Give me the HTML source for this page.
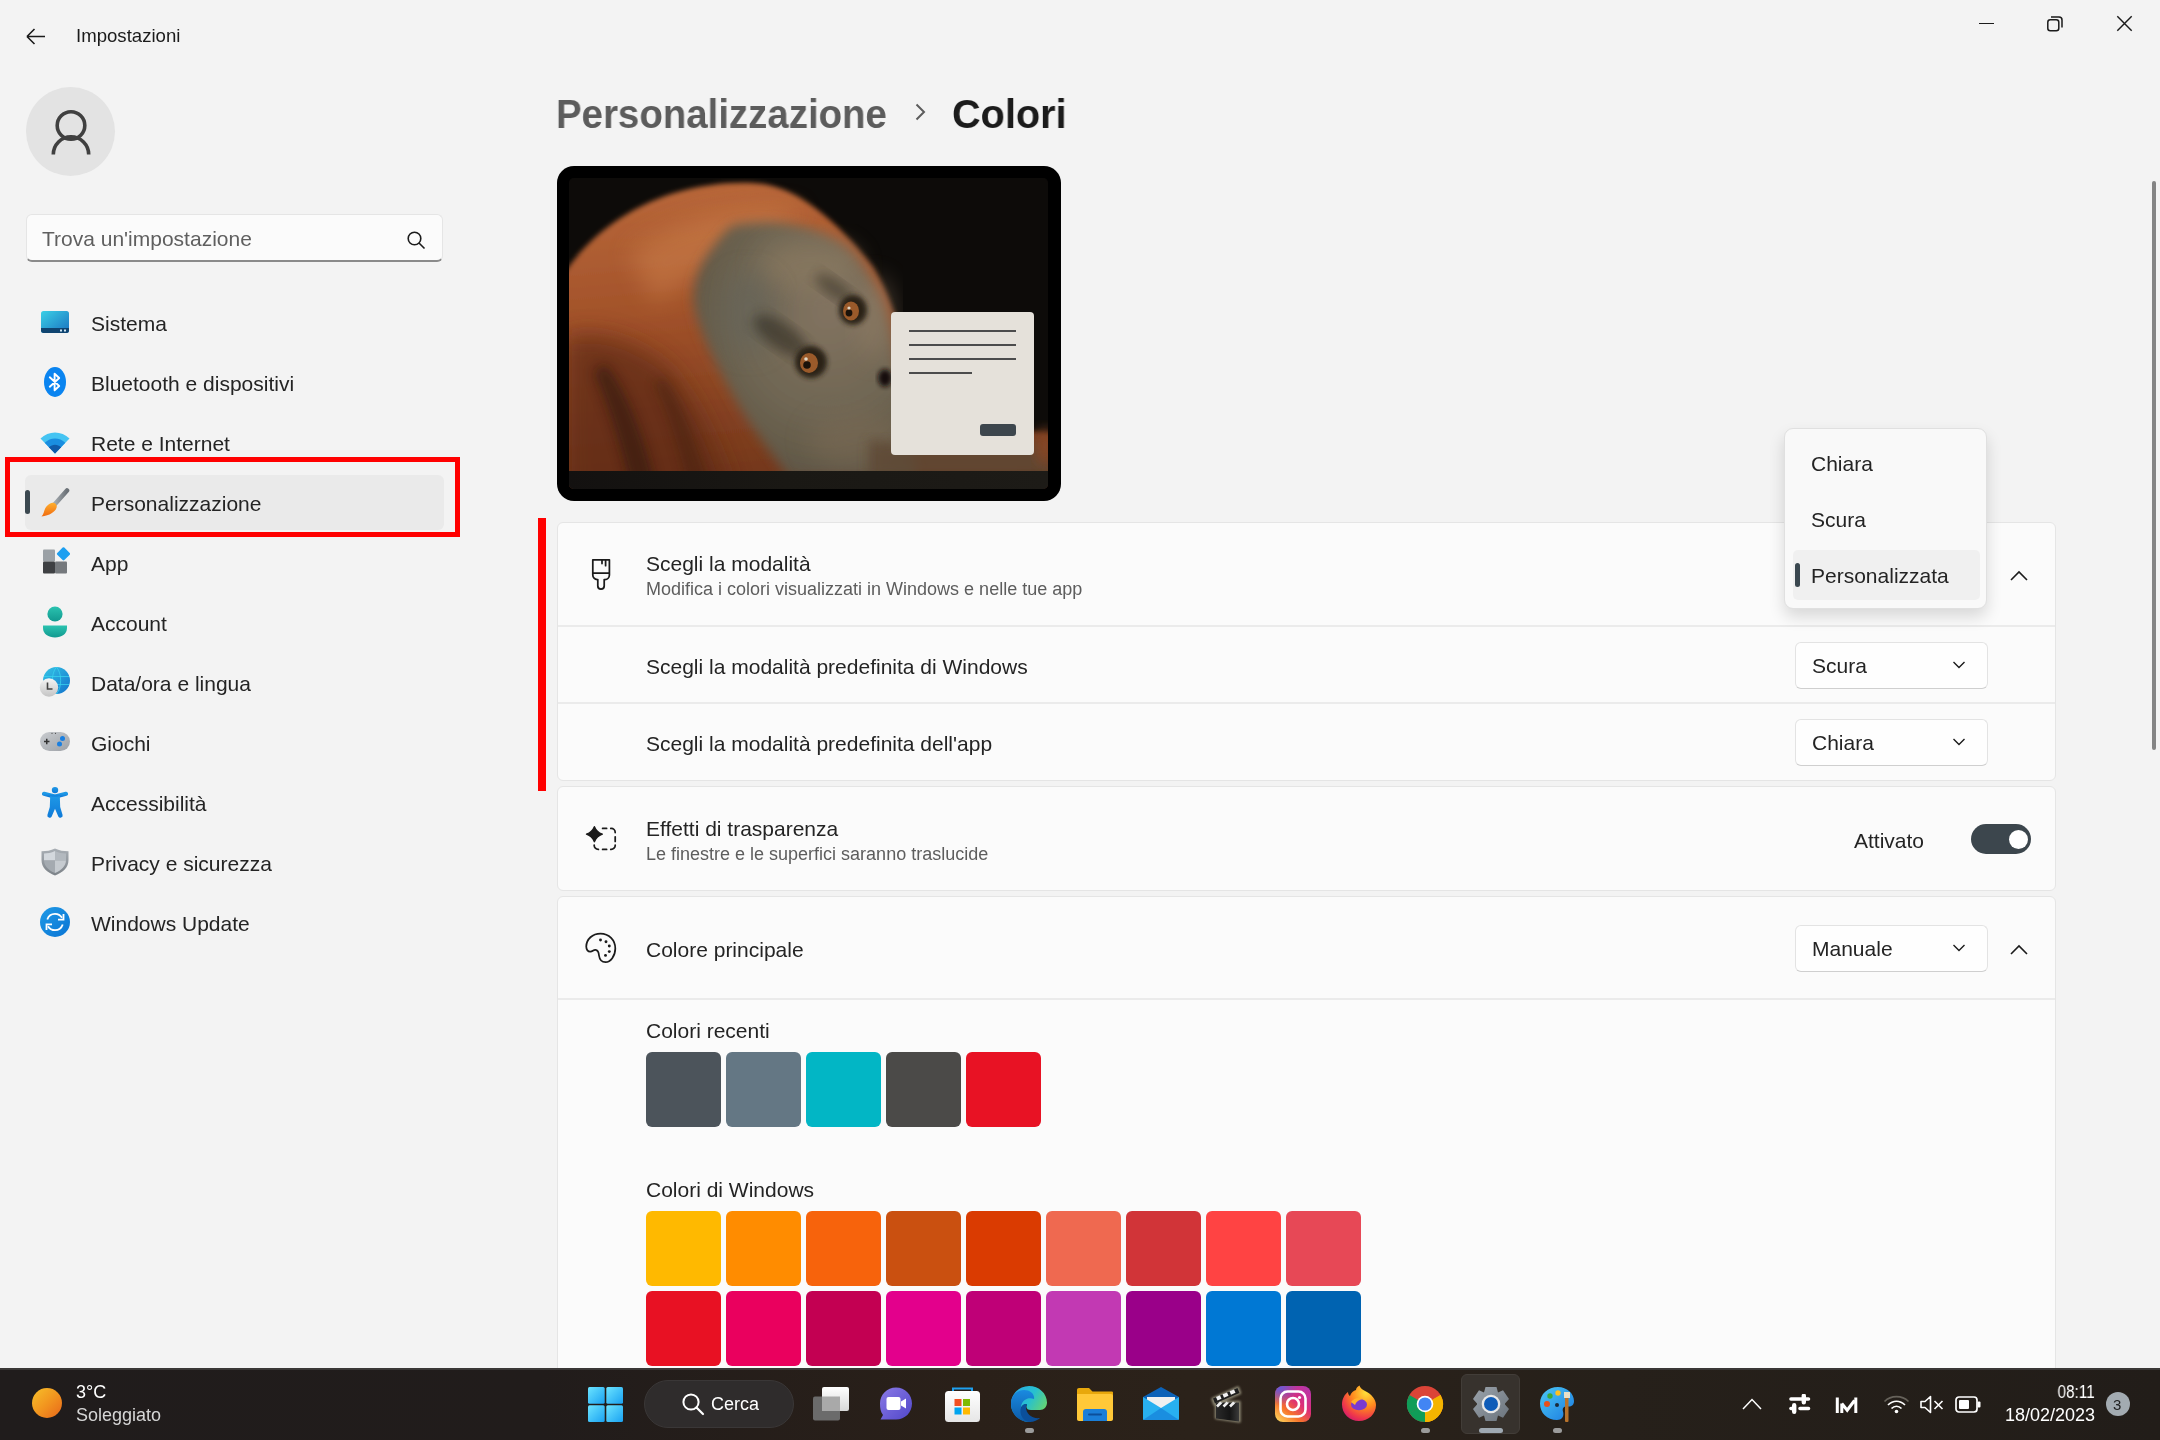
<!DOCTYPE html>
<html><head><meta charset="utf-8">
<style>
*{margin:0;padding:0;box-sizing:border-box}
html,body{width:2160px;height:1440px;overflow:hidden;background:#f3f3f3;font-family:"Liberation Sans",sans-serif;color:#242424}
.a{position:absolute}
.t{position:absolute;white-space:nowrap;line-height:1;will-change:transform}
.nav{font-size:21px;color:#242424}
.card{position:absolute;background:#fbfbfb;border:1.5px solid #e5e5e5;border-radius:6px}
.sep{position:absolute;height:2px;background:#ebebeb}
.dd{position:absolute;background:#fefefe;border:1.5px solid #e3e3e3;border-bottom-color:#cfcfcf;border-radius:6px}
.sw{position:absolute;width:75px;height:75px;border-radius:6px}
</style></head><body>

<!-- title bar -->
<svg class="a" style="left:24px;top:26px" width="24" height="22" viewBox="0 0 24 22"><path d="M3 10.5H21M3 10.5L10.5 3M3 10.5L10.5 18" stroke="#1b1b1b" stroke-width="1.6" fill="none"/></svg>
<div class="t" style="left:76px;top:27px;font-size:18.6px;color:#1b1b1b">Impostazioni</div>

<!-- window controls -->
<div class="a" style="left:1979px;top:22.7px;width:15px;height:1.5px;background:#1b1b1b"></div>
<svg class="a" style="left:2045px;top:14px" width="20" height="18" viewBox="0 0 20 18"><rect x="2.8" y="5.8" width="11" height="11" rx="2.5" fill="none" stroke="#1b1b1b" stroke-width="1.5"/><path d="M6 3H14C15.8 3 17 4.2 17 6V13.5" fill="none" stroke="#1b1b1b" stroke-width="1.5"/></svg>
<svg class="a" style="left:2116px;top:15px" width="17" height="17" viewBox="0 0 17 17"><path d="M1.3 1.3L15.7 15.7M15.7 1.3L1.3 15.7" stroke="#1b1b1b" stroke-width="1.45"/></svg>

<!-- avatar -->
<div class="a" style="left:26px;top:87px;width:89px;height:89px;border-radius:50%;background:#e3e3e3"></div>
<svg class="a" style="left:45px;top:105px" width="52" height="52" viewBox="0 0 52 52"><circle cx="26" cy="20.5" r="13.8" fill="none" stroke="#404040" stroke-width="3.6"/><path d="M8.3 49.5A17.7 17.7 0 0 1 43.7 49.5" fill="none" stroke="#404040" stroke-width="3.6"/></svg>

<!-- search -->
<div class="a" style="left:26px;top:214px;width:417px;height:48px;background:#fbfbfb;border:1px solid #e5e5e5;border-bottom:2px solid #8a8a8a;border-radius:6px"></div>
<div class="t" style="left:42px;top:228px;font-size:21px;color:#5f5f5f">Trova un'impostazione</div>
<svg class="a" style="left:405px;top:229px" width="22" height="22" viewBox="0 0 22 22"><circle cx="9.5" cy="9.5" r="6.3" fill="none" stroke="#1b1b1b" stroke-width="1.6"/><path d="M14 14L19.5 19.5" stroke="#1b1b1b" stroke-width="1.6"/></svg>

<!-- nav selected -->
<div class="a" style="left:25px;top:475px;width:419px;height:55px;background:#eaeaea;border-radius:6px"></div>
<div class="a" style="left:25px;top:490px;width:5px;height:24px;background:#3b4850;border-radius:3px"></div>

<!-- nav text -->
<div class="t nav" style="left:91px;top:313px">Sistema</div>
<div class="t nav" style="left:91px;top:373px">Bluetooth e dispositivi</div>
<div class="t nav" style="left:91px;top:433px">Rete e Internet</div>
<div class="t nav" style="left:91px;top:493px">Personalizzazione</div>
<div class="t nav" style="left:91px;top:553px">App</div>
<div class="t nav" style="left:91px;top:613px">Account</div>
<div class="t nav" style="left:91px;top:673px">Data/ora e lingua</div>
<div class="t nav" style="left:91px;top:733px">Giochi</div>
<div class="t nav" style="left:91px;top:793px">Accessibilità</div>
<div class="t nav" style="left:91px;top:853px">Privacy e sicurezza</div>
<div class="t nav" style="left:91px;top:913px">Windows Update</div>


<!-- Sistema icon -->
<svg class="a" style="left:40px;top:310px" width="30" height="24" viewBox="0 0 30 24"><defs><linearGradient id="gs" x1="0" y1="0" x2="1" y2="1"><stop offset="0" stop-color="#3bd0e6"/><stop offset="1" stop-color="#1a72c0"/></linearGradient></defs><rect x="1" y="1" width="28" height="22" rx="2.5" fill="url(#gs)"/><path d="M1 18H29V20.5C29 21.9 27.9 23 26.5 23H3.5C2.1 23 1 21.9 1 20.5Z" fill="#0f4470"/><rect x="20" y="19.5" width="2" height="2" fill="#cfe6f5"/><rect x="24" y="19.5" width="2" height="2" fill="#cfe6f5"/></svg>
<!-- Bluetooth -->
<svg class="a" style="left:42px;top:366px" width="26" height="32" viewBox="0 0 26 32"><ellipse cx="13" cy="16" rx="11" ry="15" fill="#0a84f0"/><path d="M7.8 11.3L17.2 20L12.6 24.3V7.7L17.2 12L7.8 20.7" fill="none" stroke="#fff" stroke-width="1.9" stroke-linejoin="round" stroke-linecap="round"/></svg>
<!-- Wifi -->
<svg class="a" style="left:40px;top:431px" width="30" height="23" viewBox="0 0 30 23"><path d="M0.5 7.5C8.5 -0.5 21.5 -0.5 29.5 7.5L15 22.5Z" fill="#45c4f2"/><path d="M4.7 11.8C10.5 6 19.5 6 25.3 11.8L15 22.5Z" fill="#1a8ee0"/><path d="M8.9 16.2C12.3 12.8 17.7 12.8 21.1 16.2L15 22.5Z" fill="#0f5aa8"/></svg>
<!-- Brush -->
<svg class="a" style="left:40px;top:487px" width="30" height="30" viewBox="0 0 30 30"><defs><linearGradient id="gbh" x1="0" y1="0" x2="1" y2="0"><stop offset="0" stop-color="#a3a9ae"/><stop offset="1" stop-color="#6b7177"/></linearGradient><linearGradient id="gbt" x1="0" y1="0" x2="0" y2="1"><stop offset="0" stop-color="#ffb02e"/><stop offset="1" stop-color="#f06a10"/></linearGradient></defs><path d="M15 17L27 3.5" stroke="url(#gbh)" stroke-width="4.6" stroke-linecap="round"/><path d="M12.2 15.8C14.8 15.2 17.5 17.8 16.6 20.6C15.5 24.5 10 28.6 1.5 29.5C4 27.5 3.8 23 6.2 19.8C8.2 17.4 10.3 16.2 12.2 15.8Z" fill="url(#gbt)"/></svg>
<!-- App -->
<svg class="a" style="left:42px;top:547px" width="28" height="28" viewBox="0 0 28 28"><rect x="1" y="2.5" width="12" height="12" rx="1" fill="#9ba1a6"/><rect x="1" y="14.5" width="12" height="12" rx="1" fill="#3e4043"/><rect x="13" y="14.5" width="12" height="12" rx="1" fill="#75797d"/><rect x="16.5" y="1.8" width="10" height="10" rx="1.2" transform="rotate(45 21.5 6.8)" fill="#1d9ff0"/></svg>
<!-- Account -->
<svg class="a" style="left:42px;top:605px" width="26" height="34" viewBox="0 0 26 34"><defs><linearGradient id="ga" x1="0" y1="0" x2="0" y2="1"><stop offset="0" stop-color="#2bc3b0"/><stop offset="1" stop-color="#11998f"/></linearGradient></defs><circle cx="13" cy="9" r="7.6" fill="url(#ga)"/><path d="M1 20.5H25V23C25 29 19.5 32.5 13 32.5S1 29 1 23Z" fill="url(#ga)"/></svg>
<!-- Data/ora -->
<svg class="a" style="left:38px;top:665px" width="34" height="34" viewBox="0 0 34 34"><defs><linearGradient id="gg" x1="0" y1="0" x2="1" y2="1"><stop offset="0" stop-color="#36c6e6"/><stop offset="1" stop-color="#1272cc"/></linearGradient><linearGradient id="gc" x1="0" y1="0" x2="0" y2="1"><stop offset="0" stop-color="#f5f5f5"/><stop offset="1" stop-color="#c4c4c4"/></linearGradient></defs><circle cx="18.5" cy="15.5" r="13.5" fill="url(#gg)"/><path d="M6 11.5H31M6 19.5H31M18.5 2C13 8 13 23 18.5 29M18.5 2C24 8 24 23 18.5 29" fill="none" stroke="#3ad6f0" stroke-width="0.9" opacity="0.8"/><circle cx="11" cy="22.5" r="9.2" fill="url(#gc)"/><path d="M9.5 17.5V24H14.5" fill="none" stroke="#444" stroke-width="1.6"/></svg>
<!-- Giochi -->
<svg class="a" style="left:39px;top:731px" width="32" height="22" viewBox="0 0 32 22"><defs><linearGradient id="gj" x1="0" y1="0" x2="1" y2="1"><stop offset="0" stop-color="#c9ccd0"/><stop offset="1" stop-color="#9da1a6"/></linearGradient></defs><rect x="1" y="1" width="30" height="19" rx="9.5" fill="url(#gj)"/><path d="M5 10.5H10.5M7.75 7.7V13.3" stroke="#333" stroke-width="1.5"/><circle cx="23.5" cy="7.5" r="2.5" fill="#1a7fe0"/><circle cx="20.5" cy="13" r="2.5" fill="#1a7fe0"/><circle cx="13" cy="2.3" r="0.6" fill="#444"/><circle cx="16.5" cy="2.3" r="0.6" fill="#444"/></svg>
<!-- Accessibilita -->
<svg class="a" style="left:41px;top:786px" width="28" height="33" viewBox="0 0 28 33"><defs><linearGradient id="gac" x1="0" y1="0" x2="0" y2="1"><stop offset="0" stop-color="#1e98e6"/><stop offset="1" stop-color="#0f7ad8"/></linearGradient></defs><circle cx="14" cy="4.1" r="3.2" fill="url(#gac)"/><path d="M3 7.8L14 10.6L25 7.8" fill="none" stroke="url(#gac)" stroke-width="4.2" stroke-linecap="round" stroke-linejoin="round"/><path d="M9.2,10 C11,10.8 17,10.8 18.8,10 L19.2,21 L21.6,29 A2.3,2.3 0 0 1 17.3,30.5 L14,22.8 L10.7,30.5 A2.3,2.3 0 0 1 6.4,29 L8.8,21 Z" fill="url(#gac)"/></svg>
<!-- Privacy shield -->
<svg class="a" style="left:40px;top:847px" width="30" height="30" viewBox="0 0 30 30"><defs><linearGradient id="gsh" x1="0" y1="0" x2="0" y2="1"><stop offset="0" stop-color="#a9afb5"/><stop offset="1" stop-color="#7c8288"/></linearGradient><clipPath id="shc"><path d="M15 4C11 6 7.5 6.4 4 6.5V13C4 19 8.5 23.3 15 26C21.5 23.3 26 19 26 13V6.5C22.5 6.4 19 6 15 4Z"/></clipPath></defs><path d="M15 1.5C10.5 3.8 6.5 4 1.5 4.2V13C1.5 20.5 7 25.5 15 28.5C23 25.5 28.5 20.5 28.5 13V4.2C23.5 4 19.5 3.8 15 1.5Z" fill="url(#gsh)"/><g clip-path="url(#shc)"><rect x="0" y="0" width="15" height="13.5" fill="#d3d8dd"/><rect x="15" y="0" width="15" height="13.5" fill="#b3b9bf"/><rect x="0" y="13.5" width="15" height="17" fill="#a4aab0"/><rect x="15" y="13.5" width="15" height="17" fill="#c6cbd0"/></g></svg>
<!-- Windows Update -->
<svg class="a" style="left:39px;top:906px" width="32" height="32" viewBox="0 0 32 32"><defs><linearGradient id="gu" x1="0" y1="0" x2="1" y2="1"><stop offset="0" stop-color="#1f9ae6"/><stop offset="1" stop-color="#0a74d4"/></linearGradient></defs><circle cx="16" cy="16" r="15" fill="url(#gu)"/><path d="M8.3 13.5C9.5 9.8 12.5 7.8 16 7.8C19 7.8 21.5 9.3 23 11.8" fill="none" stroke="#fff" stroke-width="1.8"/><path d="M24.5 8V13.6H19" fill="none" stroke="#fff" stroke-width="1.8"/><path d="M23.7 18.5C22.5 22.2 19.5 24.2 16 24.2C13 24.2 10.5 22.7 9 20.2" fill="none" stroke="#fff" stroke-width="1.8"/><path d="M7.5 24V18.4H13" fill="none" stroke="#fff" stroke-width="1.8"/></svg>


<!-- red box -->
<div class="a" style="left:4.5px;top:456.5px;width:455px;height:80px;border:5.2px solid #ff0000"></div>
<div class="a" style="left:538px;top:518px;width:8px;height:273px;background:#ff0000"></div>

<!-- breadcrumb -->
<div class="t" style="left:556px;top:93.5px;font-size:41px;font-weight:bold;color:#5c5c5c;transform:scaleX(0.937);transform-origin:0 0">Personalizzazione</div>
<svg class="a" style="left:912px;top:102px" width="16" height="20" viewBox="0 0 16 20"><path d="M4.5 2.5L12 10L4.5 17.5" fill="none" stroke="#5c5c5c" stroke-width="2"/></svg>
<div class="t" style="left:952px;top:93.5px;font-size:41px;font-weight:bold;color:#1b1b1b;transform:scaleX(0.968);transform-origin:0 0">Colori</div>

<!-- PREVIEW -->
<div class="a" style="left:557px;top:166px;width:504px;height:335px;background:#000;border-radius:17px"></div>
<div class="a" style="left:569px;top:178px;width:479px;height:311px;border-radius:5px;overflow:hidden;background:#0d0b09">
<svg width="479" height="311" viewBox="0 0 479 311" style="display:block">
<defs>
<filter id="b3" x="-20%" y="-20%" width="140%" height="140%"><feGaussianBlur stdDeviation="2.5"/></filter>
<filter id="b6" x="-20%" y="-20%" width="140%" height="140%"><feGaussianBlur stdDeviation="6"/></filter>
<filter id="b12" x="-30%" y="-30%" width="160%" height="160%"><feGaussianBlur stdDeviation="12"/></filter>
<linearGradient id="hairg" x1="0.2" y1="0" x2="0.35" y2="1"><stop offset="0" stop-color="#b9683a"/><stop offset="0.4" stop-color="#a2522a"/><stop offset="1" stop-color="#6e341a"/></linearGradient>
<radialGradient id="faceg" cx="0.6" cy="0.35" r="0.7"><stop offset="0" stop-color="#827360"/><stop offset="0.6" stop-color="#6e6552"/><stop offset="1" stop-color="#5c5343"/></radialGradient>
</defs>
<rect width="479" height="311" fill="#0d0b09"/>
<path filter="url(#b3)" d="M-10,320 V104 C10,68 50,32 105,15 C140,5 170,3 195,6 C232,12 270,45 304,89 C313,104 320,120 326,138 L344,240 C400,248 450,252 490,256 V320 Z" fill="url(#hairg)"/>
<path filter="url(#b12)" d="M-5,160 C30,150 70,165 100,190 C125,220 145,260 165,320 L-5,320 Z" fill="#5e2a14" opacity="0.7"/>
<path filter="url(#b6)" d="M35,185 C55,205 75,255 88,311 L62,311 C52,270 40,230 25,195Z" fill="#2a140a" opacity="0.55"/>
<path filter="url(#b6)" d="M95,200 C110,220 125,260 140,311 L120,311 C110,270 100,235 85,205Z" fill="#3a1a0c" opacity="0.4"/>
<path filter="url(#b12)" d="M60,75 C110,38 180,22 235,32 C205,58 140,88 85,125 Z" fill="#d28650" opacity="0.45"/>
<path filter="url(#b6)" d="M165,47 C200,41 243,44 278,70 C302,92 316,122 324,160 L348,300 L220,300 C200,272 176,242 162,214 C148,188 134,162 127,137 C120,114 128,88 145,68 C152,58 158,51 165,47 Z" fill="url(#faceg)"/>
<ellipse filter="url(#b12)" cx="240" cy="88" rx="50" ry="26" fill="#8c7b62" opacity="0.6"/>
<ellipse filter="url(#b12)" cx="305" cy="140" rx="18" ry="40" fill="#958068" opacity="0.5"/>
<ellipse filter="url(#b12)" cx="290" cy="262" rx="50" ry="28" fill="#7c6a55" opacity="0.5"/>
<ellipse filter="url(#b12)" cx="180" cy="135" rx="30" ry="40" fill="#64645a" opacity="0.55"/>
<ellipse filter="url(#b6)" cx="212" cy="158" rx="32" ry="13" transform="rotate(35 212 158)" fill="#2c271e" opacity="0.55"/>
<ellipse filter="url(#b6)" cx="265" cy="110" rx="22" ry="9" transform="rotate(35 265 110)" fill="#2c271e" opacity="0.45"/>
<ellipse cx="284" cy="132" rx="14" ry="15" fill="#2a2219" filter="url(#b3)"/>
<ellipse cx="282" cy="133" rx="8" ry="9.5" fill="#9a5a2a"/>
<circle cx="280" cy="135" r="3.4" fill="#1a120a"/>
<circle cx="280" cy="130" r="1.6" fill="#e0d8c8"/>
<ellipse cx="242" cy="184" rx="16" ry="16" fill="#2a2219" filter="url(#b3)"/>
<ellipse cx="240" cy="185" rx="9" ry="10" fill="#9a5a2a"/>
<circle cx="238" cy="187" r="3.8" fill="#1a120a"/>
<circle cx="237" cy="181" r="1.8" fill="#e0d8c8"/>
<ellipse cx="316" cy="200" rx="7" ry="9" fill="#15110c" filter="url(#b3)"/>
<rect x="0" y="293" width="479" height="18" fill="#131110"/>
<path filter="url(#b6)" d="M300,262 C360,270 420,268 470,262 L490,300 L300,300 Z" fill="#5e4836" opacity="0.85"/><ellipse filter="url(#b6)" cx="476" cy="268" rx="10" ry="18" fill="#8a4a26" opacity="0.8"/>
<defs><linearGradient id="ptb" x1="0" y1="0" x2="1" y2="0"><stop offset="0" stop-color="#131110"/><stop offset="0.45" stop-color="#1a1814"/><stop offset="1" stop-color="#1d1b17"/></linearGradient></defs><rect x="0" y="293" width="479" height="18" fill="url(#ptb)"/>
<rect x="322" y="134" width="143" height="143" rx="4" fill="#e5e1da"/>
<rect x="340" y="152" width="107" height="2" fill="#4c4c4c"/>
<rect x="340" y="166" width="107" height="2" fill="#4c4c4c"/>
<rect x="340" y="180" width="107" height="2" fill="#4c4c4c"/>
<rect x="340" y="194" width="63" height="2" fill="#4c4c4c"/>
<rect x="411" y="246" width="36" height="12" rx="3" fill="#3d464d"/>
</svg></div>

<!-- CARDS -->
<div class="card" style="left:557px;top:522px;width:1499px;height:259px"></div>
<div class="sep" style="left:558px;top:625px;width:1497px"></div>
<div class="sep" style="left:558px;top:702px;width:1497px"></div>
<div class="card" style="left:557px;top:786px;width:1499px;height:105px"></div>
<div class="card" style="left:557px;top:896px;width:1499px;height:520px"></div>
<div class="sep" style="left:558px;top:998px;width:1497px"></div>

<div class="t" style="left:646px;top:553px;font-size:21px">Scegli la modalità</div>
<div class="t" style="left:646px;top:580px;font-size:18px;color:#5d5d5d">Modifica i colori visualizzati in Windows e nelle tue app</div>
<div class="t" style="left:646px;top:656px;font-size:21px">Scegli la modalità predefinita di Windows</div>
<div class="t" style="left:646px;top:733px;font-size:21px">Scegli la modalità predefinita dell'app</div>
<div class="t" style="left:646px;top:818px;font-size:21px">Effetti di trasparenza</div>
<div class="t" style="left:646px;top:845px;font-size:18px;color:#5d5d5d">Le finestre e le superfici saranno traslucide</div>
<div class="t" style="left:646px;top:939px;font-size:21px">Colore principale</div>


<!-- card icons -->
<svg class="a" style="left:580px;top:550px" width="40" height="45" viewBox="0 0 40 45"><path d="M12.8,9.8 H29.4 V25 C29.4,27.6 27.5,29.5 25,29.5 H24.2 V36 C24.2,38 22.8,39 21,39 C19.2,39 17.8,38 17.8,36 V29.5 H17.2 C14.7,29.5 12.8,27.6 12.8,25 Z M12.8,23 H29.4 M22,10 V13.5 M25.6,10 V15.7" fill="none" stroke="#1b1b1b" stroke-width="1.75" stroke-linecap="round" stroke-linejoin="round"/></svg>
<svg class="a" style="left:580px;top:815px" width="45" height="45" viewBox="0 0 45 45"><path d="M14.4,11.7 Q16.5,17.1 22.3,19.2 Q16.5,21.3 14.4,26.7 Q12.3,21.3 6.5,19.2 Q12.3,17.1 14.4,11.7 Z" fill="#1b1b1b" stroke="#1b1b1b" stroke-width="1.4" stroke-linejoin="round"/><path d="M22.6,13.4 H26.6 M30.8,13.4 H31.2 A4,4 0 0 1 35.2,17.4 V17.6 M35.2,21.8 V26.4 M35.2,30.2 V30.4 A4,4 0 0 1 31.2,34.4 H30.8 M26.6,34.4 H22.6 M18.4,34.4 H18.2 A4,4 0 0 1 14.2,30.4 V30" fill="none" stroke="#1b1b1b" stroke-width="1.75" stroke-linecap="round"/></svg>
<svg class="a" style="left:580px;top:925px" width="45" height="45" viewBox="0 0 45 45"><path d="M20.5,8.6 C29,8.6 35.3,15 35.3,23.5 C35.3,31 30.5,37.2 25.5,37.2 C21.5,37.2 19.5,34 19,30.5 C18.7,27 18,25 15.5,24.8 C13.5,24.6 12.5,26.5 10.5,26.7 C8,27 6.25,24.5 6.25,21.5 C6.5,14 12.5,8.6 20.5,8.6 Z" fill="none" stroke="#1b1b1b" stroke-width="1.75"/><circle cx="20.5" cy="15" r="1.45" fill="#1b1b1b"/><circle cx="26" cy="16.8" r="1.45" fill="#1b1b1b"/><circle cx="29.3" cy="21" r="1.45" fill="#1b1b1b"/><circle cx="29.3" cy="26.6" r="1.45" fill="#1b1b1b"/><circle cx="25.5" cy="30.4" r="1.45" fill="#1b1b1b"/></svg>

<!-- dropdowns -->
<div class="dd" style="left:1795px;top:642px;width:193px;height:47px"></div>
<div class="t" style="left:1812px;top:655px;font-size:21px">Scura</div>
<svg class="a" style="left:1952px;top:660px" width="14" height="10" viewBox="0 0 14 10"><path d="M1.5 2L7 7.5L12.5 2" fill="none" stroke="#1b1b1b" stroke-width="1.4"/></svg>
<div class="dd" style="left:1795px;top:719px;width:193px;height:47px"></div>
<div class="t" style="left:1812px;top:732px;font-size:21px">Chiara</div>
<svg class="a" style="left:1952px;top:737px" width="14" height="10" viewBox="0 0 14 10"><path d="M1.5 2L7 7.5L12.5 2" fill="none" stroke="#1b1b1b" stroke-width="1.4"/></svg>
<div class="dd" style="left:1795px;top:925px;width:193px;height:47px"></div>
<div class="t" style="left:1812px;top:938px;font-size:21px">Manuale</div>
<svg class="a" style="left:1952px;top:943px" width="14" height="10" viewBox="0 0 14 10"><path d="M1.5 2L7 7.5L12.5 2" fill="none" stroke="#1b1b1b" stroke-width="1.4"/></svg>

<!-- chevron up -->
<svg class="a" style="left:2009px;top:568.5px" width="20" height="14" viewBox="0 0 20 14"><path d="M2 11L10 3L18 11" fill="none" stroke="#1b1b1b" stroke-width="1.6"/></svg>
<svg class="a" style="left:2009px;top:942.5px" width="20" height="14" viewBox="0 0 20 14"><path d="M2 11L10 3L18 11" fill="none" stroke="#1b1b1b" stroke-width="1.6"/></svg>

<!-- toggle -->
<div class="t" style="left:1854px;top:830px;font-size:21px">Attivato</div>
<div class="a" style="left:1971px;top:824px;width:60px;height:30px;border-radius:15px;background:#3c464d"></div>
<div class="a" style="left:2008.5px;top:829.5px;width:19px;height:19px;border-radius:50%;background:#fff"></div>

<!-- colors -->
<div class="t" style="left:646px;top:1020px;font-size:21px">Colori recenti</div>
<div class="sw" style="left:646px;top:1052px;background:#4c545b"></div>
<div class="sw" style="left:726px;top:1052px;background:#647784"></div>
<div class="sw" style="left:806px;top:1052px;background:#02b6c5"></div>
<div class="sw" style="left:886px;top:1052px;background:#4b4a48"></div>
<div class="sw" style="left:966px;top:1052px;background:#e81224"></div>

<div class="t" style="left:646px;top:1179px;font-size:21px">Colori di Windows</div>
<div class="sw" style="left:646px;top:1211px;background:#ffb900"></div>
<div class="sw" style="left:726px;top:1211px;background:#ff8c00"></div>
<div class="sw" style="left:806px;top:1211px;background:#f7630c"></div>
<div class="sw" style="left:886px;top:1211px;background:#ca5010"></div>
<div class="sw" style="left:966px;top:1211px;background:#da3b01"></div>
<div class="sw" style="left:1046px;top:1211px;background:#ef6950"></div>
<div class="sw" style="left:1126px;top:1211px;background:#d13438"></div>
<div class="sw" style="left:1206px;top:1211px;background:#ff4343"></div>
<div class="sw" style="left:1286px;top:1211px;background:#e74856"></div>
<div class="sw" style="left:646px;top:1291px;background:#e81123"></div>
<div class="sw" style="left:726px;top:1291px;background:#ea005e"></div>
<div class="sw" style="left:806px;top:1291px;background:#c30052"></div>
<div class="sw" style="left:886px;top:1291px;background:#e3008c"></div>
<div class="sw" style="left:966px;top:1291px;background:#bf0077"></div>
<div class="sw" style="left:1046px;top:1291px;background:#c239b3"></div>
<div class="sw" style="left:1126px;top:1291px;background:#9a0089"></div>
<div class="sw" style="left:1206px;top:1291px;background:#0078d4"></div>
<div class="sw" style="left:1286px;top:1291px;background:#0063b1"></div>

<!-- scrollbar -->
<div class="a" style="left:2152.3px;top:180.5px;width:3.5px;height:569.5px;border-radius:2px;background:#848484"></div>

<!-- popup -->
<div class="a" style="left:1784px;top:428px;width:203px;height:181px;background:#f9f9f9;border:1px solid #e0e0e0;border-radius:9px;box-shadow:0 8px 16px rgba(0,0,0,0.14)"></div>
<div class="a" style="left:1793px;top:550px;width:187px;height:50px;background:#f0f0f0;border-radius:5px"></div>
<div class="a" style="left:1795px;top:563px;width:5px;height:24px;background:#3b4850;border-radius:3px"></div>
<div class="t" style="left:1811px;top:453px;font-size:21px">Chiara</div>
<div class="t" style="left:1811px;top:509px;font-size:21px">Scura</div>
<div class="t" style="left:1811px;top:565px;font-size:21px">Personalizzata</div>

<!-- TASKBAR -->
<div class="a" style="left:0;top:1368px;width:2160px;height:72px;background:linear-gradient(90deg,#201c1c 0%,#211c1b 25%,#2a2019 45%,#2b221a 55%,#26201a 75%,#221d19 100%)"></div>
<div class="a" style="left:0;top:1368px;width:2160px;height:2px;background:#3a3736"></div>
<!-- weather -->
<svg class="a" style="left:31px;top:1387px" width="32" height="32" viewBox="0 0 32 32"><defs><linearGradient id="gsun" x1="0" y1="0" x2="1" y2="1"><stop offset="0" stop-color="#f7c02a"/><stop offset="0.5" stop-color="#f2961f"/><stop offset="1" stop-color="#e8661a"/></linearGradient></defs><circle cx="16" cy="16" r="15" fill="url(#gsun)"/></svg>
<div class="t" style="left:76px;top:1383px;font-size:18px;color:#fff">3°C</div>
<div class="t" style="left:76px;top:1406px;font-size:18px;color:#d6d6d6">Soleggiato</div>
<!-- start -->
<svg class="a" style="left:588px;top:1387px" width="35" height="35" viewBox="0 0 35 35"><defs><linearGradient id="gw" x1="0" y1="0" x2="1" y2="1"><stop offset="0" stop-color="#6ce4ff"/><stop offset="1" stop-color="#1aa2f2"/></linearGradient></defs><rect x="0" y="0" width="16.7" height="16.7" rx="1.5" fill="url(#gw)"/><rect x="18.3" y="0" width="16.7" height="16.7" rx="1.5" fill="url(#gw)"/><rect x="0" y="18.3" width="16.7" height="16.7" rx="1.5" fill="url(#gw)"/><rect x="18.3" y="18.3" width="16.7" height="16.7" rx="1.5" fill="url(#gw)"/></svg>
<!-- search pill -->
<div class="a" style="left:644px;top:1380px;width:150px;height:48px;border-radius:24px;background:#2f2c2c;border:1px solid #3a3737"></div>
<svg class="a" style="left:681px;top:1392px" width="24" height="24" viewBox="0 0 24 24"><circle cx="10" cy="10" r="7.6" fill="none" stroke="#fff" stroke-width="2"/><path d="M15.5 15.5L22 22" stroke="#fff" stroke-width="2.2" stroke-linecap="round"/></svg>
<div class="t" style="left:711px;top:1395px;font-size:18px;color:#fff">Cerca</div>
<!-- task view -->
<svg class="a" style="left:812px;top:1386px" width="38" height="36" viewBox="0 0 38 36"><defs><linearGradient id="gtv" x1="0" y1="0" x2="0" y2="1"><stop offset="0" stop-color="#ffffff"/><stop offset="1" stop-color="#d8d8d8"/></linearGradient></defs><rect x="1" y="10.5" width="27" height="24" rx="2" fill="#6b6b6b"/><rect x="10" y="1" width="27" height="24" rx="2" fill="url(#gtv)"/><rect x="10" y="10.5" width="18" height="14.5" fill="#a9a9a9"/></svg>
<!-- meet -->
<svg class="a" style="left:878px;top:1386px" width="36" height="36" viewBox="0 0 36 36"><defs><linearGradient id="gm" x1="0" y1="0" x2="1" y2="1"><stop offset="0" stop-color="#8a7ae6"/><stop offset="1" stop-color="#5147c9"/></linearGradient></defs><path d="M18 1.5C27 1.5 34 8.5 34 17.5S27 33.5 18 33.5H2.5L5 29C2.5 26 2 22 2 17.5C2 8.5 9 1.5 18 1.5Z" fill="url(#gm)"/><rect x="8.5" y="11" width="14" height="13" rx="2" fill="#fff"/><path d="M23 15.5L28 12.5V22.5L23 19.5Z" fill="#fff"/></svg>
<!-- store -->
<svg class="a" style="left:944px;top:1386px" width="37" height="37" viewBox="0 0 37 37"><defs><linearGradient id="gst" x1="0" y1="0" x2="0" y2="1"><stop offset="0" stop-color="#ffffff"/><stop offset="1" stop-color="#e6e6e6"/></linearGradient></defs><path d="M9 6V2.5H28V6" fill="none" stroke="#1ea0f0" stroke-width="2"/><rect x="1" y="5" width="35" height="31" rx="3.5" fill="url(#gst)"/><rect x="10.5" y="13" width="7" height="7" fill="#f25022"/><rect x="19" y="13" width="7" height="7" fill="#7fba00"/><rect x="10.5" y="21.5" width="7" height="7" fill="#00a4ef"/><rect x="19" y="21.5" width="7" height="7" fill="#ffb900"/></svg>
<!-- edge -->
<svg class="a" style="left:1010px;top:1385px" width="38" height="38" viewBox="0 0 38 38"><defs><linearGradient id="ge1" x1="0" y1="0" x2="1" y2="0.6"><stop offset="0" stop-color="#2aa8e8"/><stop offset="0.55" stop-color="#27c0d0"/><stop offset="1" stop-color="#6ad66a"/></linearGradient><linearGradient id="ge2" x1="0" y1="0" x2="0" y2="1"><stop offset="0" stop-color="#1a8ae0"/><stop offset="1" stop-color="#0c5aa8"/></linearGradient></defs><path d="M19 1C29 1 37 8.5 37 17.5C37 22 34 25 30 25H21C17 25 15.5 22.5 17 19.5C14 19 11 21 10.5 25C10 30 14 35.5 21 37C10 37 1 29 1 19C1 9 9 1 19 1Z" fill="url(#ge1)"/><path d="M1 19C1 9 8 5 14 5C20 5 25 9 24 14C19 12 12 14 11 22C10 29 15 35 22 36.5C20 37 19.5 37 19 37C9 37 1 29 1 19Z" fill="url(#ge2)"/><path d="M16 22C16 29 22 34 30 33C26 36.5 22 37 19.5 37C13 36 10 30 10.5 25C11 20 14 18.5 17 19Z" fill="#0b4f9a"/></svg>
<div class="a" style="left:1025px;top:1428px;width:9px;height:5px;border-radius:3px;background:#9b9b9b"></div>
<!-- folder -->
<svg class="a" style="left:1076px;top:1387px" width="38" height="35" viewBox="0 0 38 35"><path d="M1 3C1 1.8 1.8 1 3 1H13L16.5 4.5H36C37 4.5 37 5.5 37 6V12H1Z" fill="#e8a80c"/><path d="M1 7H35C36.2 7 37 7.8 37 9V32C37 33.2 36.2 34 35 34H3C1.8 34 1 33.2 1 32Z" fill="#ffc838"/><path d="M7 25C7 23 8 22 10 22H28C30 22 31 23 31 25V34H7Z" fill="#1a7ed8"/><rect x="12" y="26.5" width="14" height="2" rx="1" fill="#0c4f9a"/></svg>
<!-- mail -->
<svg class="a" style="left:1142px;top:1386px" width="38" height="35" viewBox="0 0 38 35"><path d="M1 11L19 1L37 11V33H1Z" fill="#0c62b8"/><path d="M5 11H33V24H5Z" fill="#f0f0f0"/><path d="M1 11L19 22L37 11V33C37 33.5 36.5 34 36 34H2C1.5 34 1 33.5 1 33Z" fill="#28b0f0"/><path d="M1 34L19 22L37 34Z" fill="#1a8ee0"/></svg>
<!-- clapper -->
<svg class="a" style="left:1208px;top:1383px" width="38" height="42" viewBox="0 0 38 42"><defs><filter id="glw" x="-30%" y="-30%" width="160%" height="160%"><feGaussianBlur stdDeviation="1.2"/></filter><linearGradient id="gcb" x1="0" y1="0" x2="1" y2="0"><stop offset="0" stop-color="#2a2a2a"/><stop offset="0.6" stop-color="#151515"/><stop offset="1" stop-color="#3a3a3a"/></linearGradient></defs>
<g filter="url(#glw)" opacity="0.55"><path d="M4.5 16L30 4.5L32 10L6.5 21.5Z M8 19H31.5V38.5L8 35Z" fill="#d8d6b8" stroke="#d8d6b8" stroke-width="2.5" stroke-linejoin="round"/></g>
<path d="M5 15.5L29.5 5L31.5 10L7 20.5Z" fill="#1e1e1e"/>
<path d="M8 14L12 12.3L13.5 15.8L9.5 17.5Z M14.5 11.3L19 9.4L20.5 12.8L16 14.7Z M21.5 8.3L26 6.4L27.5 9.8L23 11.7Z" fill="#f2f2f2"/>
<path d="M8 19.5H31V38.5L8 35.5Z" fill="url(#gcb)"/>
<path d="M9.5 21.5L12.5 19.5H15L12 21.5Z M16 21.5L19 19.5H21.5L18.5 21.5Z M22.5 21.5L25.5 19.5H28L25 21.5Z" fill="#f2f2f2"/>
<path d="M9 23.5L13 19.5M15.5 23.5L19.5 19.5M22 23.5L26 19.5" stroke="#f0f0f0" stroke-width="2.6"/>
</svg>
<!-- instagram -->
<svg class="a" style="left:1275px;top:1386px" width="36" height="36" viewBox="0 0 36 36"><defs><linearGradient id="gig" x1="0.1" y1="1" x2="0.9" y2="0"><stop offset="0" stop-color="#fed55b"/><stop offset="0.3" stop-color="#f7742b"/><stop offset="0.6" stop-color="#dd2d78"/><stop offset="1" stop-color="#b437ae"/></linearGradient><radialGradient id="gig2" cx="0.1" cy="0" r="0.55"><stop offset="0" stop-color="#5b5fe0"/><stop offset="1" stop-color="#5b5fe0" stop-opacity="0"/></radialGradient></defs><rect x="0" y="0" width="36" height="36" rx="8" fill="url(#gig)"/><rect x="0" y="0" width="36" height="36" rx="8" fill="url(#gig2)"/><rect x="5.5" y="5.5" width="25" height="25" rx="7" fill="none" stroke="#fff" stroke-width="2.6"/><circle cx="18" cy="18" r="6" fill="none" stroke="#fff" stroke-width="2.6"/><circle cx="24.5" cy="11.5" r="1.6" fill="#fff"/></svg>
<!-- firefox -->
<svg class="a" style="left:1341px;top:1385px" width="36" height="37" viewBox="0 0 36 37"><defs><radialGradient id="gff" cx="0.7" cy="0.2" r="0.9"><stop offset="0" stop-color="#ffe03a"/><stop offset="0.45" stop-color="#ff8a1e"/><stop offset="0.8" stop-color="#f0384a"/><stop offset="1" stop-color="#d01a6e"/></radialGradient></defs><path d="M18 36C8.5 36 1 28.5 1 19.5C1 14 3.5 9.5 7 7C7 9 8 10.5 9 11C10 8 12.5 5.5 15 5C15 3 17 1 18.5 0.5C19 3 22 5 25 6.5C30 9 35 14 35 20C35 29 27.5 36 18 36Z" fill="url(#gff)"/><ellipse cx="18" cy="19.5" rx="8" ry="5.8" fill="#7a3ad0"/><path d="M10 17C13 13 18 12 22 14C18 14.5 15 17 14 20Z" fill="#ffb02a"/></svg>
<!-- chrome -->
<svg class="a" style="left:1406px;top:1385px" width="38" height="38" viewBox="0 0 38 38"><circle cx="19" cy="19" r="18" fill="#db4437"/><path d="M19 19L3.4 28A18 18 0 0 0 19 37Z" fill="#0f9d58"/><path d="M19 19H1V19A18 18 0 0 0 3.4 28Z" fill="#0f9d58"/><path d="M19 19L34.6 10A18 18 0 0 1 19 37Z" fill="#f4b400"/><path d="M19 19L3.4 10A18 18 0 0 0 3.4 28Z" fill="#0f9d58"/><path d="M19 19L19 37A18 18 0 0 0 37 19 L34.6 10Z" fill="#f4b400"/><circle cx="19" cy="19" r="8.3" fill="#fff"/><circle cx="19" cy="19" r="6.6" fill="#4285f4"/></svg>
<div class="a" style="left:1421px;top:1428px;width:9px;height:5px;border-radius:3px;background:#9b9b9b"></div>
<!-- settings highlighted -->
<div class="a" style="left:1461px;top:1374px;width:59px;height:60px;border-radius:6px;background:#37322d;border:1px solid #423d38"></div>
<svg class="a" style="left:1472px;top:1386px" width="38" height="36" viewBox="0 0 38 36"><defs><linearGradient id="ggear" x1="0" y1="0" x2="1" y2="1"><stop offset="0" stop-color="#9ba3ab"/><stop offset="1" stop-color="#6a737c"/></linearGradient></defs><path d="M13.5 1H24.5L26 6.5L31 4.3L37 13L33 17.5V18.5L37 23L31 31.7L26 29.5L24.5 35H13.5L12 29.5L7 31.7L1 23L5 18.5V17.5L1 13L7 4.3L12 6.5Z" fill="url(#ggear)" stroke-linejoin="round"/><circle cx="19" cy="18" r="9.3" fill="#e8e8e8"/><circle cx="19" cy="18" r="7" fill="#0f5cb8"/></svg>
<div class="a" style="left:1479px;top:1428px;width:24px;height:5px;border-radius:3px;background:#9fa9b2"></div>
<!-- paint -->
<svg class="a" style="left:1539px;top:1386px" width="36" height="37" viewBox="0 0 36 37"><defs><linearGradient id="gp" x1="0" y1="0" x2="1" y2="1"><stop offset="0" stop-color="#4cc8f5"/><stop offset="1" stop-color="#1a7ae0"/></linearGradient></defs><path d="M19 1C28 1 35 7.5 35 15C35 19.5 32 21 28.5 20.5C25 20 23 22 24 25.5C25.5 30.5 22.5 34 18 34C8 34 1 27 1 17.5C1 8 9 1 19 1Z" fill="url(#gp)"/><circle cx="8" cy="18" r="3" fill="#e8501a"/><circle cx="11" cy="10" r="2.7" fill="#3aa83a"/><circle cx="19" cy="7" r="2.7" fill="#ffc020"/><circle cx="18" cy="19" r="2" fill="#1a2a3a"/><rect x="26" y="11" width="3.5" height="25" rx="1" fill="#b8722a"/><path d="M25 6H31V12H25Z" fill="#e8e0c8"/></svg>
<div class="a" style="left:1553px;top:1428px;width:9px;height:5px;border-radius:3px;background:#9b9b9b"></div>
<!-- tray -->
<svg class="a" style="left:1741px;top:1396px" width="22" height="15" viewBox="0 0 22 15"><path d="M2 13L11 3.5L20 13" fill="none" stroke="#fff" stroke-width="1.5"/></svg>
<svg class="a" style="left:1788px;top:1394px" width="24" height="20" viewBox="0 0 24 20"><path d="M3 5H20.5M12 14.5H20.5" stroke="#fff" stroke-width="3.6" stroke-linecap="round"/><path d="M15.8 1.8V8.2M6.2 11.3V17.7" stroke="#fff" stroke-width="4.4" stroke-linecap="round"/><path d="M3 14.5H6" stroke="#fff" stroke-width="3.6" stroke-linecap="round"/></svg>
<svg class="a" style="left:1834px;top:1395px" width="26" height="20" viewBox="0 0 26 20"><path d="M3.3 2.5V18M7.8 8.5V18M7.8 8.5L13.2 15.2L20.5 5.5M21.8 2.5V18" fill="none" stroke="#fff" stroke-width="3"/></svg>
<svg class="a" style="left:1883px;top:1394px" width="27" height="20" viewBox="0 0 27 20"><path d="M1.5 7.5C8 1 19 1 25.5 7.5" fill="none" stroke="#66625a" stroke-width="1.6"/><path d="M5 11C10 6 17 6 22 11" fill="none" stroke="#fff" stroke-width="1.7"/><path d="M8.5 14.5C11.5 11.5 15.5 11.5 18.5 14.5" fill="none" stroke="#fff" stroke-width="1.7"/><circle cx="13.5" cy="17.5" r="1.8" fill="#fff"/></svg>
<svg class="a" style="left:1919px;top:1395px" width="26" height="19" viewBox="0 0 26 19"><path d="M2 6.5H6L11.5 1.5V17.5L6 12.5H2Z" fill="none" stroke="#fff" stroke-width="1.6" stroke-linejoin="round"/><path d="M15.5 6L23.5 14M23.5 6L15.5 14" stroke="#fff" stroke-width="1.6"/></svg>
<svg class="a" style="left:1955px;top:1396px" width="26" height="17" viewBox="0 0 26 17"><rect x="1" y="1" width="21" height="15" rx="3" fill="none" stroke="#fff" stroke-width="1.7"/><rect x="4" y="4" width="10" height="9" rx="1" fill="#fff"/><rect x="22.5" y="5.5" width="3" height="6" rx="1" fill="#fff"/></svg>
<div class="t" style="right:65px;top:1383px;font-size:18px;color:#fff;transform:scaleX(0.85);transform-origin:100% 0">08:11</div>
<div class="t" style="right:65px;top:1406px;font-size:18px;color:#fff">18/02/2023</div>
<div class="a" style="left:2106px;top:1392px;width:24px;height:24px;border-radius:50%;background:#a3abb1"></div>
<div class="t" style="left:2113px;top:1397px;font-size:15px;color:#222">3</div>


</body></html>
